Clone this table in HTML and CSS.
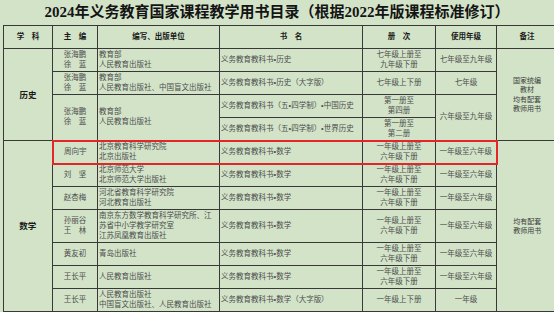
FILE: index.html
```html
<!DOCTYPE html>
<html lang="zh-CN">
<head>
<meta charset="utf-8">
<title>2024年义务教育国家课程教学用书目录</title>
<link rel="stylesheet" href="styles.css">
</head>
<body>
<h1 class="title">2024年义务教育国家课程教学用书目录（根据2022年版课程标准修订）</h1>
<div class="wrap">
<table class="catalog">
<colgroup>
<col class="c-subj"><col class="c-ed"><col class="c-pub"><col class="c-book"><col class="c-vol"><col class="c-grade"><col class="c-note">
</colgroup>
<thead>
<tr class="r-head">
<th>学　科</th><th>主　编</th><th>编写、出版单位</th><th>书　名</th><th>册　次</th><th>使用年级</th><th>备注</th>
</tr>
</thead>
<tbody>
<tr>
<td class="subj" rowspan="4">历史</td>
<td class="ed">张海鹏<br>徐　蓝</td>
<td class="pub">教育部<br>人民教育出版社</td>
<td class="book">义务教育教科书•历史</td>
<td class="ctr">七年级上册至<br>九年级下册</td>
<td class="ctr">七年级至九年级</td>
<td class="note" rowspan="4">国家统编<br>教材<br>均有配套<br>教师用书</td>
</tr>
<tr>
<td class="ed">张海鹏<br>徐　蓝</td>
<td class="pub">教育部<br>人民教育出版社、中国盲文出版社</td>
<td class="book">义务教育教科书•历史（大字版）</td>
<td class="ctr">七年级上下册</td>
<td class="ctr">七年级</td>
</tr>
<tr>
<td class="ed" rowspan="2">张海鹏<br>徐　蓝</td>
<td class="pub" rowspan="2">教育部<br>人民教育出版社</td>
<td class="book">义务教育教科书（五•四学制）•中国历史</td>
<td class="ctr">第一册至<br>第四册</td>
<td class="ctr" rowspan="2">六年级至九年级</td>
</tr>
<tr>
<td class="book">义务教育教科书（五•四学制）•世界历史</td>
<td class="ctr">第一册至<br>第二册</td>
</tr>
<tr class="hl">
<td class="subj subj-math" rowspan="7">数学</td>
<td class="ed hl-first">周向宇</td>
<td class="pub">北京教育科学研究院<br>北京出版社</td>
<td class="book">义务教育教科书•数学</td>
<td class="ctr">一年级上册至<br>六年级下册</td>
<td class="ctr hl-last">一年级至六年级</td>
<td class="note note-math" rowspan="7">均有配套<br>教师用书</td>
</tr>
<tr>
<td class="ed">刘　坚</td>
<td class="pub">北京师范大学<br>北京师范大学出版社</td>
<td class="book">义务教育教科书•数学</td>
<td class="ctr">一年级上册至<br>六年级下册</td>
<td class="ctr">一年级至六年级</td>
</tr>
<tr>
<td class="ed">赵杏梅</td>
<td class="pub">河北省教育科学研究院<br>河北教育出版社</td>
<td class="book">义务教育教科书•数学</td>
<td class="ctr">一年级上册至<br>六年级下册</td>
<td class="ctr">一年级至六年级</td>
</tr>
<tr class="r-tall">
<td class="ed">孙丽谷<br>王　林</td>
<td class="pub">南京东方数学教育科学研究所、江<br>苏省中小学教学研究室<br>江苏凤凰教育出版社</td>
<td class="book">义务教育教科书•数学</td>
<td class="ctr">一年级上册至<br>六年级下册</td>
<td class="ctr">一年级至六年级</td>
</tr>
<tr>
<td class="ed">黄友初</td>
<td class="pub">青岛出版社</td>
<td class="book">义务教育教科书•数学</td>
<td class="ctr">一年级上册至<br>六年级下册</td>
<td class="ctr">一年级至六年级</td>
</tr>
<tr>
<td class="ed">王长平</td>
<td class="pub">人民教育出版社</td>
<td class="book">义务教育教科书•数学</td>
<td class="ctr">一年级上册至<br>六年级下册</td>
<td class="ctr">一年级至六年级</td>
</tr>
<tr>
<td class="ed">王长平</td>
<td class="pub">人民教育出版社<br>中国盲文出版社、人民教育出版社</td>
<td class="book">义务教育教科书•数学（大字版）</td>
<td class="ctr">一年级上下册</td>
<td class="ctr">一年级</td>
</tr>
</tbody>
</table>
</div>
</body>
</html>
```
FILE: styles.css
```css
html, body {
  margin: 0;
  padding: 0;
}
body {
  background: #d2e3c8;
  overflow: hidden;
  font-family: "Noto Sans CJK SC", sans-serif;
  color: #4d4d4d;
}
.title {
  margin: 0;
  height: 25px;
  font-family: "Liberation Serif", "Noto Sans CJK SC", serif;
  font-weight: 700;
  font-size: 15px;
  line-height: 25px;
  text-align: center;
  color: #141414;
  white-space: nowrap;
}
.wrap {
  padding-left: 3px;
}
.catalog {
  border-collapse: collapse;
  table-layout: fixed;
  width: 554px;
  font-family: "Liberation Sans", "Noto Sans CJK SC", sans-serif;
  font-size: 7.5px;
  line-height: 10px;
}
.c-subj { width: 49px; }
.c-ed { width: 45px; }
.c-pub { width: 122px; }
.c-book { width: 143px; }
.c-vol { width: 73px; }
.c-grade { width: 61px; }
.c-note { width: 61px; }

.catalog th,
.catalog td {
  border: 1px solid #383838;
  padding: 0 1px;
  vertical-align: middle;
  white-space: nowrap;
  overflow: hidden;
}
.catalog tr {
  height: 23px;
}
.catalog tr.r-tall {
  height: 33px;
}
.catalog th {
  font-weight: 700;
  color: #1a1a1a;
  font-size: 7.5px;
  text-align: center;
}
.subj {
  text-align: center;
  font-weight: 700;
  font-size: 8.5px;
  color: #1a1a1a;
}
.subj-math {
  padding-top: 48px;
}
.ed,
.ctr,
.note {
  text-align: center;
}
.pub,
.book {
  text-align: left;
}
.book {
  padding-left: 2px;
}
.note {
  font-size: 7px;
  line-height: 9.3px;
  color: #3c3c3c;
}
.note-math {
  padding-top: 48px;
}

/* highlighted row (red frame) */
.hl .ed,
.hl .pub,
.hl .book,
.hl .ctr {
  border-top: 2px solid #e3262a;
  border-bottom: 2px solid #e3262a;
}
.hl .hl-first {
  border-left: 2px solid #e3262a;
}
.hl .hl-last {
  border-right: 2px solid #e3262a;
}
```
